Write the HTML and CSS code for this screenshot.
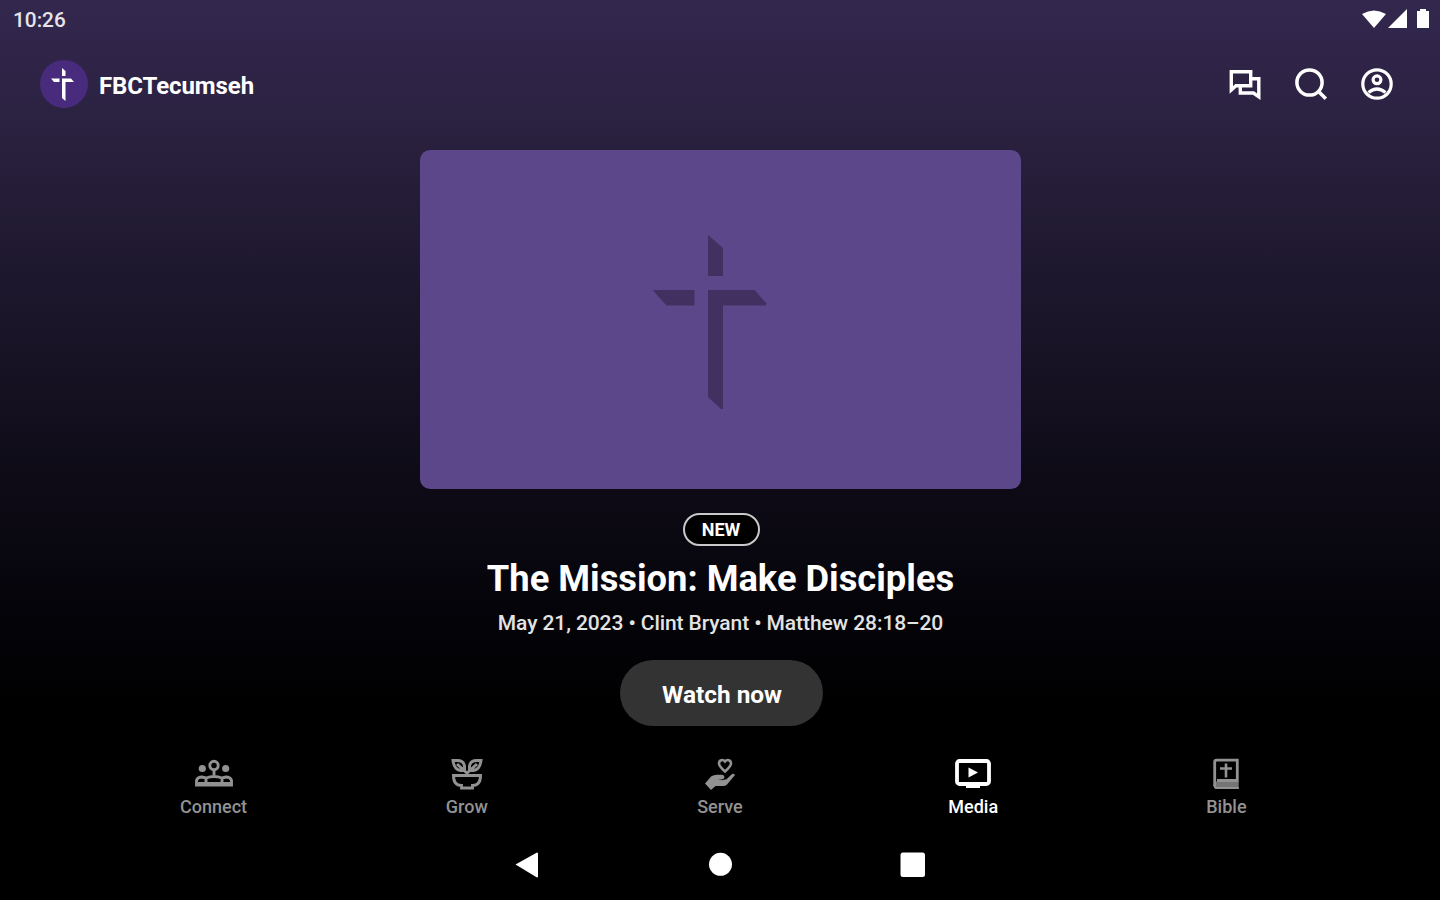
FILE: index.html
```html
<!DOCTYPE html>
<html lang="en">
<head>
    <meta charset="UTF-8" />
    <meta name="viewport" content="width=device-width, initial-scale=1.0"/>
    <title>FBCTecumseh</title>
    <link rel="stylesheet" href="styles.css">
</head>
<body>
    <div class="status-bar">
        <span class="time">10:26</span>
        <svg width="70" height="22" viewBox="0 0 70 22" fill="#fff">
            <path d="M1 6Q13-1 25 6L13 20Z"/>
            <path d="M46 1V20H27Z"/>
            <path d="M59 1h6v2h3v17H56V3h3z"/>
        </svg>
    </div>

    <header class="header">
        <div class="logo">
            <svg width="48" height="48" viewBox="0 0 48 48" fill="#fff">
                <path d="M22 8l3.500 3v5H22zM11 18.500h8.500v3.500H14zM22 18.500h9l3 3.500h-8.500V41L22 38z"/>
            </svg>
        </div>
        <span class="church">FBCTecumseh</span>
        <div class="actions">
            <svg width="34" height="34" viewBox="0 0 34 34" fill="none" stroke="#fff" stroke-width="3.400">
                <path d="M3.300 4.700h19.400v14H8L3.300 23z"/>
                <path d="M23 11.800h7.800v18L25.500 26H12.300v-7"/>
            </svg>
            <svg width="34" height="34" viewBox="0 0 34 34" fill="none" stroke="#fff" stroke-width="3.500">
                <circle cx="15.500" cy="15.500" r="12.600"/>
                <path d="M24.300 24.300l7.500 7.500"/>
            </svg>
            <svg width="34" height="34" viewBox="0 0 34 34" fill="none" stroke="#fff" stroke-width="3.200">
                <circle cx="17" cy="17" r="14.200"/>
                <circle cx="17" cy="12.800" r="3.900"/>
                <path d="M8.500 25.500q8.500-7 17 0"/>
            </svg>
        </div>
    </header>

    <main class="hero">
        <div class="artwork">
            <svg width="116" height="176" viewBox="0 0 116 176" fill="#423061">
                <path d="M56 1l15 13v28H56z"/>
                <path d="M.500 56h42v15.500h-28z"/>
                <path d="M56 56h46.500l12 13.500-1 2H71V175h-2l-13-12z"/>
            </svg>
        </div>
        <span class="badge">NEW</span>
        <h1>The Mission: Make Disciples</h1>
        <p class="details">May 21, 2023 • Clint Bryant • Matthew 28:18–20</p>
        <button class="watch">Watch now</button>
    </main>

    <nav class="tabs">
        <a class="tab">
            <svg width="40" height="34" viewBox="0 0 40 34" fill="none" stroke="currentColor" stroke-width="2.900">
                <circle cx="20" cy="8.500" r="4.200"/>
                <circle cx="8.300" cy="11.500" r="3.600" fill="currentColor" stroke="none"/>
                <circle cx="31.700" cy="11.500" r="3.600" fill="currentColor" stroke="none"/>
                <path d="M20 13v5M2.500 28v-4.500q1-3.500 5.500-3.500l4 1q8-3 16 0l4-1q4.500 0 5.500 3.500V28zM12 20.500v6M28 20.500v6M4 26.500h32"/>
            </svg>
            <span>Connect</span>
        </a>
        <a class="tab">
            <svg width="40" height="34" viewBox="0 0 40 34" fill="none" stroke="currentColor" stroke-width="2.900">
                <path d="M6 3.500h4.500q6 0 7 5.500v4.500h-4Q7 12.500 6 3.500zM34 3.500h-4.500q-6 0-7 5.500v4.500h4q6.500-1 7.500-10zM10 7l10 9L30 7"/>
                <path d="M6.500 18.500h27q0 10-8 10v2.500h-11v-2.500q-8 0-8-10z"/>
            </svg>
            <span>Grow</span>
        </a>
        <a class="tab">
            <svg width="40" height="34" viewBox="0 0 40 34" fill="currentColor">
                <path d="M25 14.500C20.500 10.500 19 9 19 6.500c0-3.700 4-4.500 6-2 2-2.500 6-1.700 6 2 0 2.500-1.500 4-6 8z" fill="none" stroke="currentColor" stroke-width="2.600"/>
                <path d="M5 26.500l6-7q3-2 7-1.700h4q2.500.2 2.500 2.500 0 1.500-2.500 2.200h-4l4 .8 4.500-1 5-4.800q2-1.500 3.500.5L27 27.500q-1.500 1.500-4 1.500h-7.500l-4.500 4z"/>
            </svg>
            <span>Serve</span>
        </a>
        <a class="tab active">
            <svg width="40" height="34" viewBox="0 0 40 34" fill="currentColor">
                <rect x="4" y="4" width="32" height="23" rx="2.500" fill="none" stroke="currentColor" stroke-width="3.800"/>
                <path d="M13 27h14v4H13zM15.500 10.500l9.500 5-9.500 5z"/>
            </svg>
            <span>Media</span>
        </a>
        <a class="tab">
            <svg width="40" height="34" viewBox="0 0 40 34" fill="none" stroke="currentColor" stroke-width="2.800">
                <path d="M8.700 29V5q0-1.800 1.800-1.800h20.800v20.300H11"/>
                <path d="M20 6.500v14M14 11.500h12" stroke-width="2.600"/>
                <path d="M9 24.500h23.700v7.500H11q-3.500 0-3.500-4z" fill="currentColor" fill-opacity=".8" stroke="none"/>
                <path d="M32.700 31H11q-2.500 0-2.500-3" stroke-width="2"/>
            </svg>
            <span>Bible</span>
        </a>
    </nav>

    <div class="system-nav">
        <svg width="26" height="28" viewBox="0 0 26 28" fill="#fff"><path d="M1.500 14.500L23 2.500q1 0 1 1v23q0 1-1 1z"/></svg>
        <svg width="26" height="28" viewBox="0 0 26 28" fill="#fff"><circle cx="13.500" cy="14.300" r="11.500"/></svg>
        <svg width="26" height="28" viewBox="0 0 26 28" fill="#fff"><rect x="0.500" y="2.500" width="24.500" height="24.500" rx="2.500"/></svg>
    </div>
</body>
</html>
```
FILE: styles.css
```css
* {
    box-sizing: border-box;
}
body {
    margin: 0;
    height: 900px;
    overflow: hidden;
    display: flex;
    flex-direction: column;
    background: linear-gradient(#33274e 0, #2c2242 110px, #1e182e 270px, #0e0b17 480px, #040308 620px, #000 720px);
    color: white;
    font-family: Roboto, sans-serif;
}
svg {
    display: block;
    flex: none;
}
.status-bar {
    height: 38px;
    padding: 0 9px 0 13px;
    display: flex;
    align-items: center;
    justify-content: space-between;
}
.time {
    font-size: 20.8px;
    font-weight: 500;
    padding-top: 2px;
    color: #e6e4ea;
}
.header {
    height: 92px;
    padding: 0 46px 0 40px;
    display: flex;
    align-items: center;
}
.logo {
    width: 48px;
    height: 48px;
    border-radius: 50%;
    background: #482b7c;
}
.church {
    margin: 4px 0 0 11px;
    font-size: 24px;
    font-weight: 700;
    letter-spacing: -0.1px;
}
.actions {
    margin-left: auto;
    display: flex;
    gap: 32px;
}
.hero {
    height: 618px;
    padding: 20px 0 0 1px;
    display: flex;
    flex-direction: column;
    align-items: center;
}
.artwork {
    width: 601px;
    height: 339px;
    padding: 84px 0 0 232px;
    border-radius: 10px;
    background: #5d478b;
}
.badge {
    width: 77px;
    height: 33px;
    margin: 24px 0 0 1px;
    border: 2px solid #c9c9cb;
    border-radius: 17px;
    background: black;
    font-size: 18px;
    font-weight: 700;
    line-height: 30px;
    text-align: center;
}
h1 {
    margin: 12px 0 0;
    font-size: 36.3px;
    font-weight: 700;
    line-height: 42px;
    white-space: nowrap;
}
.details {
    margin: 10px 0 0;
    font-size: 21px;
    font-weight: 500;
    line-height: 26px;
    letter-spacing: -0.09px;
    color: #e3e3e3;
    white-space: nowrap;
}
.watch {
    width: 203px;
    height: 66px;
    margin: 24px 0 0 1px;
    padding: 3px 0 0 2px;
    border: 0;
    border-radius: 33px;
    background: #333;
    color: white;
    font-family: inherit;
    font-size: 24.4px;
    font-weight: 700;
}
.tabs {
    height: 84px;
    padding: 9px 87px;
    display: grid;
    grid-template-columns: repeat(5, 1fr);
}
.tab {
    display: flex;
    flex-direction: column;
    align-items: center;
    font-size: 18px;
    font-weight: 500;
    line-height: 22px;
    color: #929292;
}
.tab span {
    margin-top: 5px;
}
.tab.active {
    color: white;
}
.system-nav {
    height: 64px;
    display: flex;
    align-items: center;
    justify-content: center;
    gap: 167px;
}
```
